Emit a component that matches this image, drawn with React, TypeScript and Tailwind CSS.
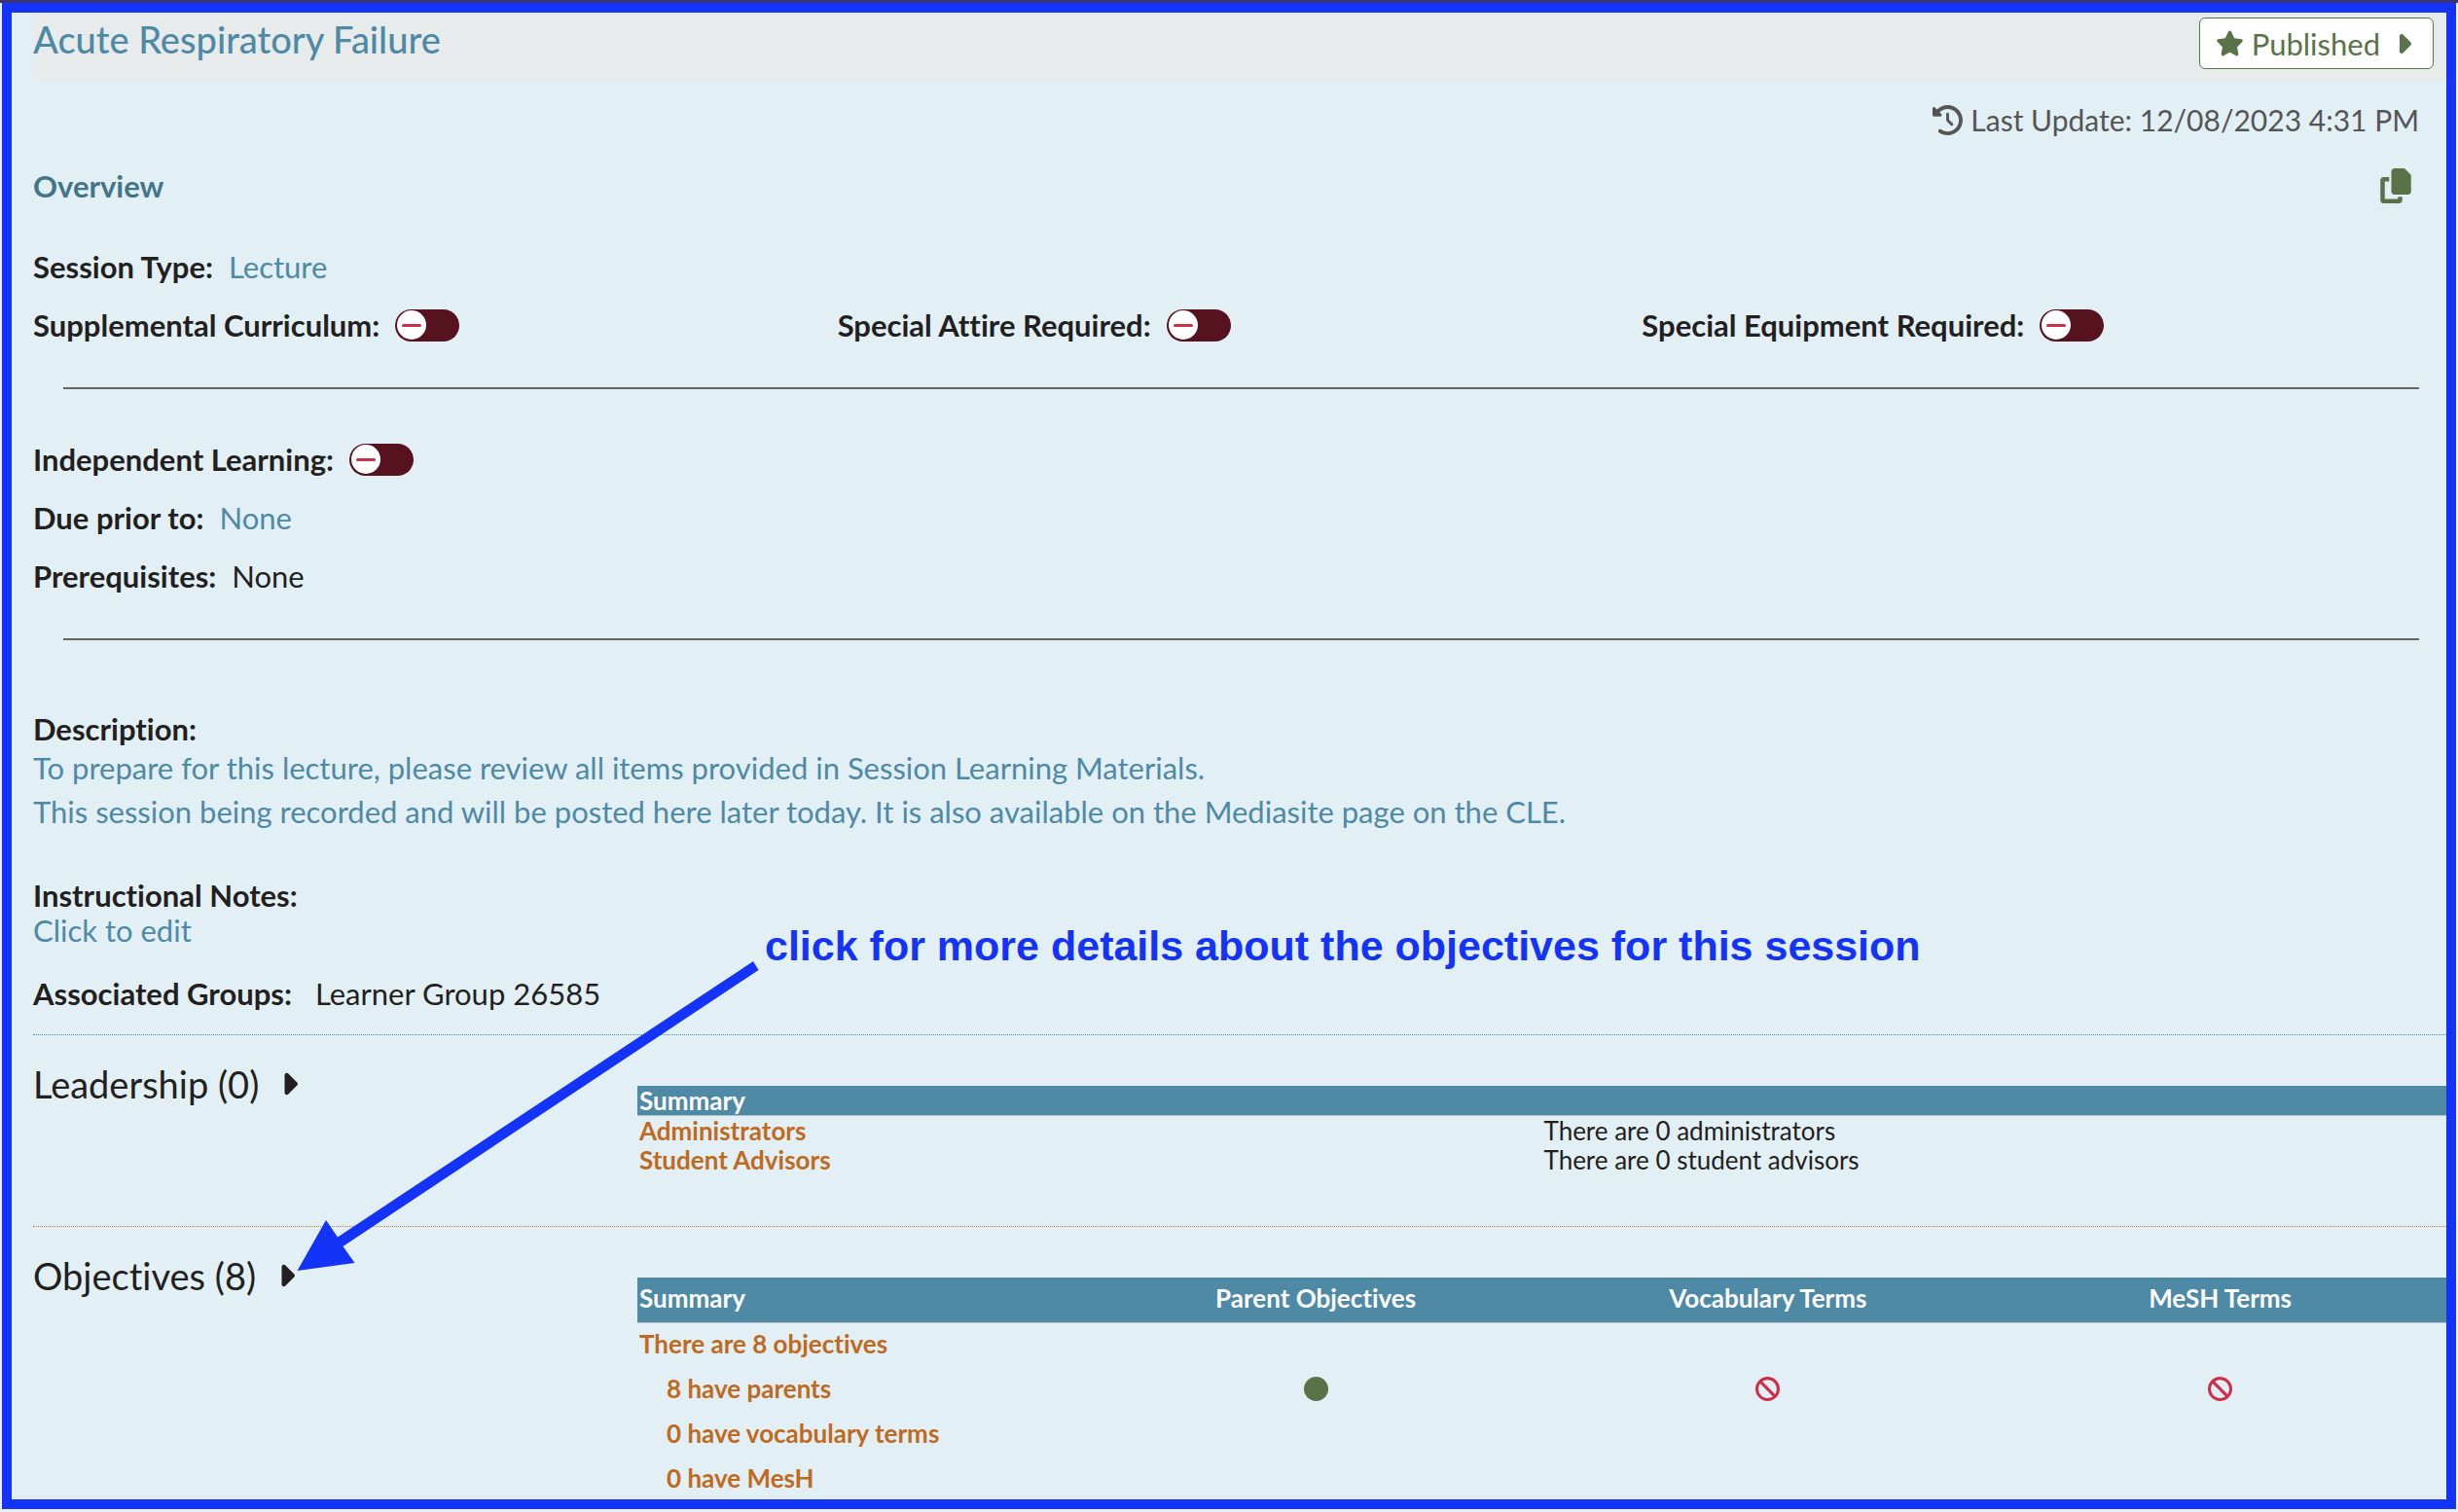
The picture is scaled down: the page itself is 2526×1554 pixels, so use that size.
import React from "react";
import { FaBan, FaCaretRight, FaCircle, FaClockRotateLeft, FaCopy, FaStar } from "react-icons/fa6";

function Toggle({ id }: { id: string }) {
  return (
    <span className="relative inline-flex h-[33px] w-[66px] shrink-0 items-center rounded-full bg-[#57121f] p-0.5">
      <input id={id} type="checkbox" role="switch" className="absolute inset-0 cursor-pointer opacity-0" />
      <span className="flex size-[30px] items-center justify-center rounded-full bg-white">
        <span className="h-[3px] w-5 rounded-full bg-[#cf2e4a]" />
      </span>
    </span>
  );
}

function ToggleField({ id, label }: { id: string; label: string }) {
  return (
    <div className="flex items-center gap-4">
      <label htmlFor={id} className="font-bold">
        {label}
      </label>
      <Toggle id={id} />
    </div>
  );
}

function Field({ label, children }: { label: string; children: React.ReactNode }) {
  return (
    <div className="flex gap-4">
      <span className="font-bold">{label}</span>
      {children}
    </div>
  );
}

function Section({ title, line, children }: { title: string; line: string; children: React.ReactNode }) {
  return (
    <section className={`grid grid-cols-4 border-t border-dotted pb-[53px] ${line}`}>
      <h2 className="pt-[30px]">
        <button type="button" className="flex items-center gap-[22px] text-[38px] leading-10">
          {title}
          <FaCaretRight className="h-9 w-[18px]" />
        </button>
      </h2>
      <div className="col-span-3 pt-[52px] pl-px text-[26px]">{children}</div>
    </section>
  );
}

const objectiveRows = ["8 have parents", "0 have vocabulary terms", "0 have MesH"];
const objectiveHeads = ["Parent Objectives", "Vocabulary Terms", "MeSH Terms"];

export default function App() {
  return (
    <div className="flex h-screen flex-col border-t-[3px] border-[#3b3470] bg-[#eaf0fb] px-0.5 pb-[3px] font-['Lato',sans-serif] text-[31px] leading-10 text-[#231f20] [font-variant-ligatures:none]">
      <main className="relative min-h-0 grow overflow-hidden border-[10px] border-[#1433f8] bg-[#e2f0f6] pl-[22px]">
        <header className="flex h-[69px] items-start justify-between bg-[#e8ebeb] pt-[5px] pr-[13px]">
          <h1 className="pt-0.5">
            <button type="button" className="text-[38px] leading-10 font-medium text-[#4e89a6]">
              Acute Respiratory Failure
            </button>
          </h1>
          <button
            type="button"
            className="flex h-[53px] items-center gap-2 rounded-md border border-[#5a7247] bg-white pr-5 pl-4 text-[#5a7247]"
          >
            <FaStar className="size-[29px]" />
            Published
            <FaCaretRight className="ml-1.5 h-8 w-5" />
          </button>
        </header>

        <p className="flex items-center justify-end gap-2 pt-[21px] pr-7 text-[30px] text-[#555555]">
          <FaClockRotateLeft className="size-[31px]" />
          Last Update: 12/08/2023 4:31 PM
        </p>

        <div className="mt-7 flex items-center justify-between pr-9">
          <h2 className="font-bold text-[#437589]">Overview</h2>
          <button type="button" aria-label="Copy session" className="text-[#5a7247]">
            <FaCopy className="h-9 w-8" />
          </button>
        </div>

        <div className="mt-[43px] flex flex-col gap-5">
          <Field label="Session Type:">
            <button type="button" className="text-[#4e89a6]">Lecture</button>
          </Field>
          <div className="grid grid-cols-3">
            <ToggleField id="supplemental" label="Supplemental Curriculum:" />
            <ToggleField id="attire" label="Special Attire Required:" />
            <ToggleField id="equipment" label="Special Equipment Required:" />
          </div>
        </div>

        <hr className="mt-11 mr-7 ml-[31px] border-t-2 border-[#666464]" />

        <div className="mt-[52px] flex flex-col gap-5">
          <ToggleField id="independent" label="Independent Learning:" />
          <Field label="Due prior to:">
            <button type="button" className="text-[#4e89a6]">None</button>
          </Field>
          <Field label="Prerequisites:">
            <span>None</span>
          </Field>
        </div>

        <hr className="mt-11 mr-7 ml-[31px] border-t-2 border-[#666464]" />

        <div className="mt-[73px]">
          <h3 className="leading-9 font-bold">Description:</h3>
          <div className="leading-[45px] text-[#4e89a6]">
            <p>To prepare for this lecture, please review all items provided in Session Learning Materials.</p>
            <p>
              This session being recorded and will be posted here later today. It is also available on the Mediasite
              page on the CLE.
            </p>
          </div>
        </div>

        <div className="mt-[45px] leading-9">
          <h3 className="font-bold">Instructional Notes:</h3>
          <button type="button" className="block text-[#4e89a6]">Click to edit</button>
        </div>

        <div className="mt-[27px] mb-[22px] flex gap-6">
          <span className="font-bold">Associated Groups:</span>
          <span>Learner Group 26585</span>
        </div>

        <Section title="Leadership (0)" line="border-[#4e89a6]">
          <table className="w-full table-fixed text-left leading-[30px]">
            <thead>
              <tr className="border-b border-[#b5c3cc] bg-[#4e89a6] text-white">
                <th colSpan={2} className="pl-0.5 font-bold">Summary</th>
              </tr>
            </thead>
            <tbody>
              <tr>
                <th className="pl-0.5 font-bold text-[#bf6a20]">Administrators</th>
                <td className="pl-0.5">There are 0 administrators</td>
              </tr>
              <tr>
                <th className="pl-0.5 font-bold text-[#bf6a20]">Student Advisors</th>
                <td className="pl-0.5">There are 0 student advisors</td>
              </tr>
            </tbody>
          </table>
        </Section>

        <Section title="Objectives (8)" line="border-[#c77a36]">
          <table className="w-full table-fixed text-left leading-[42px]">
            <thead>
              <tr className="border-b border-[#b5c3cc] bg-[#4e89a6] text-white">
                <th className="pb-1 pl-0.5 font-bold">Summary</th>
                {objectiveHeads.map((head) => (
                  <th key={head} className="pb-1 text-center font-bold">{head}</th>
                ))}
              </tr>
            </thead>
            <tbody>
              <tr>
                <th colSpan={4} className="pb-1 pl-0.5 font-bold text-[#bf6a20]">There are 8 objectives</th>
              </tr>
              {objectiveRows.map((row, i) => (
                <tr key={row}>
                  <th className="pb-1 pl-[30px] font-bold text-[#bf6a20]">{row}</th>
                  {i === 0 && (
                    <>
                      <td className="pb-1"><FaCircle className="mx-auto size-[25px] text-[#5a7247]" /></td>
                      <td className="pb-1"><FaBan className="mx-auto size-[25px] text-[#cf2e4a]" /></td>
                      <td className="pb-1"><FaBan className="mx-auto size-[25px] text-[#cf2e4a]" /></td>
                    </>
                  )}
                </tr>
              ))}
            </tbody>
          </table>
        </Section>

        <div className="pointer-events-none absolute top-[932px] left-[774px] font-['Liberation_Sans',sans-serif] text-[43px] leading-[54px] font-bold text-[#1433f8]">
          click for more details about the objectives for this session
        </div>
        <svg className="pointer-events-none absolute top-[973px] left-[292px] fill-[#1433f8]" width="490" height="322" viewBox="304 986 490 322" aria-hidden="true">
          <path d="M774 988 L779.500 997 L352.500 1281 L364.500 1298 L305.500 1306 L335 1254 L347 1271.500 Z" />
        </svg>
      </main>
    </div>
  );
}
